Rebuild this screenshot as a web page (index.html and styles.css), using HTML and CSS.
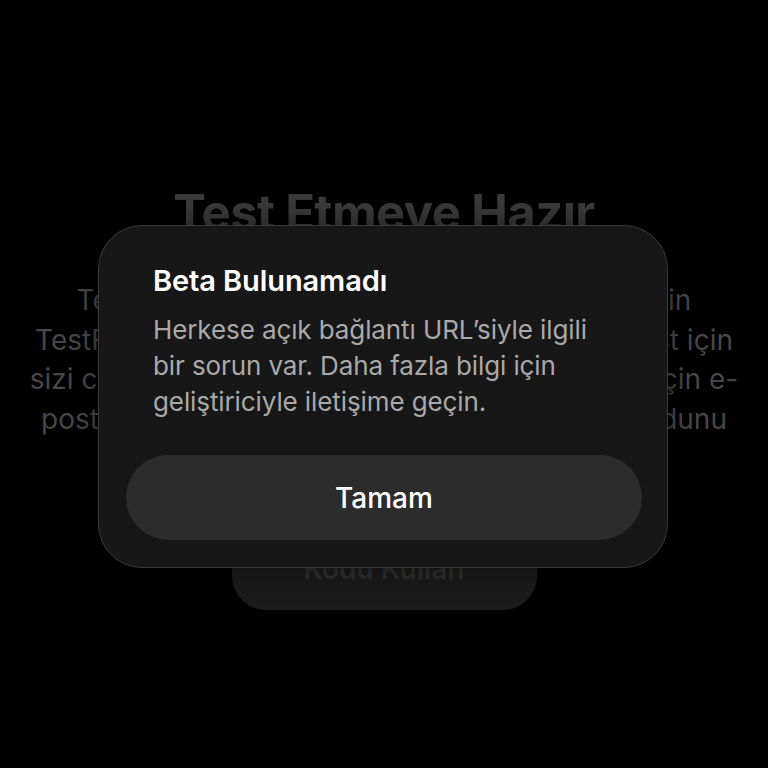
FILE: index.html
```html
<!DOCTYPE html>
<html lang="tr">
<head>
<meta charset="utf-8">
<link rel="stylesheet" href="styles.css">
</head>
<body>
<main class="screen">
  <section class="backdrop">
    <h1 class="bg-title">Test Etmeye Hazır</h1>
    <div class="bg-text">
      <div class="bg-line">Test etmeye başlamak için yazılım geliştiricinin</div>
      <div class="bg-line">TestFlight'ta bu uygulamanın beta sürümünü test için</div>
      <div class="bg-line">sizi cihazınıza eklemesi gerekiyor. Davet almak için e-</div>
      <div class="bg-line">posta kutunuzu kontrol edin veya size gelen kodunu</div>
    </div>
    <div class="bg-button">Kodu Kullan</div>
  </section>
  <div class="alert">
    <h2 class="alert-title">Beta Bulunamadı</h2>
    <p class="alert-body">Herkese açık bağlantı URL’siyle ilgili<br>bir sorun var. Daha fazla bilgi için<br>geliştiriciyle iletişime geçin.</p>
    <button class="alert-btn">Tamam</button>
  </div>
</main>
</body>
</html>
```
FILE: styles.css
```css
html, body {
  margin: 0;
  padding: 0;
  background: #000;
}
.screen {
  position: relative;
  width: 768px;
  height: 768px;
  overflow: hidden;
  background: #000;
  font-family: Inter, "Noto Sans", sans-serif;
}
.backdrop {
  display: flex;
  flex-direction: column;
  align-items: center;
  padding-top: 188px;
}
.bg-title {
  margin: 0;
  font-size: 49px;
  font-weight: 700;
  letter-spacing: -0.6px;
  color: #3b3b3b;
  line-height: 50px;
  white-space: nowrap;
}
.bg-text {
  margin-top: 43px;
  display: flex;
  flex-direction: column;
  align-items: center;
  color: #474747;
  font-size: 28px;
  line-height: 39.5px;
}
.bg-line {
  text-align: center;
  white-space: nowrap;
}
.bg-button {
  margin-top: 71px;
  width: 305px;
  height: 100px;
  border-radius: 34px;
  background: #1b1b1b;
  color: #2f2f2f;
  font-size: 28px;
  font-weight: 600;
  line-height: 34px;
  display: flex;
  align-items: flex-end;
  justify-content: center;
  padding-bottom: 24px;
  box-sizing: border-box;
}
.alert {
  position: absolute;
  left: 98px;
  top: 225px;
  width: 570px;
  height: 343px;
  box-sizing: border-box;
  border-radius: 44px;
  background: #171717;
  border: 1px solid #3a3a3a;
  padding: 37px 26px 0 27px;
  display: flex;
  flex-direction: column;
  box-shadow: 0 0 30px rgba(0, 0, 0, 0.5);
}
.alert-title {
  margin: 0 0 0 27px;
  color: #fff;
  font-size: 29px;
  font-weight: 600;
  letter-spacing: -0.1px;
  line-height: 36px;
  white-space: nowrap;
}
.alert-body {
  margin: 13px 0 0 27px;
  color: #a9a9a9;
  font-size: 26px;
  line-height: 36px;
  letter-spacing: -0.1px;
  white-space: nowrap;
}
.alert-btn {
  margin-top: 35px;
  height: 85px;
  width: 516px;
  flex: none;
  border: none;
  border-radius: 43px;
  background: #2c2c2c;
  color: #fff;
  font-family: inherit;
  font-size: 28px;
  font-weight: 500;
}
```
